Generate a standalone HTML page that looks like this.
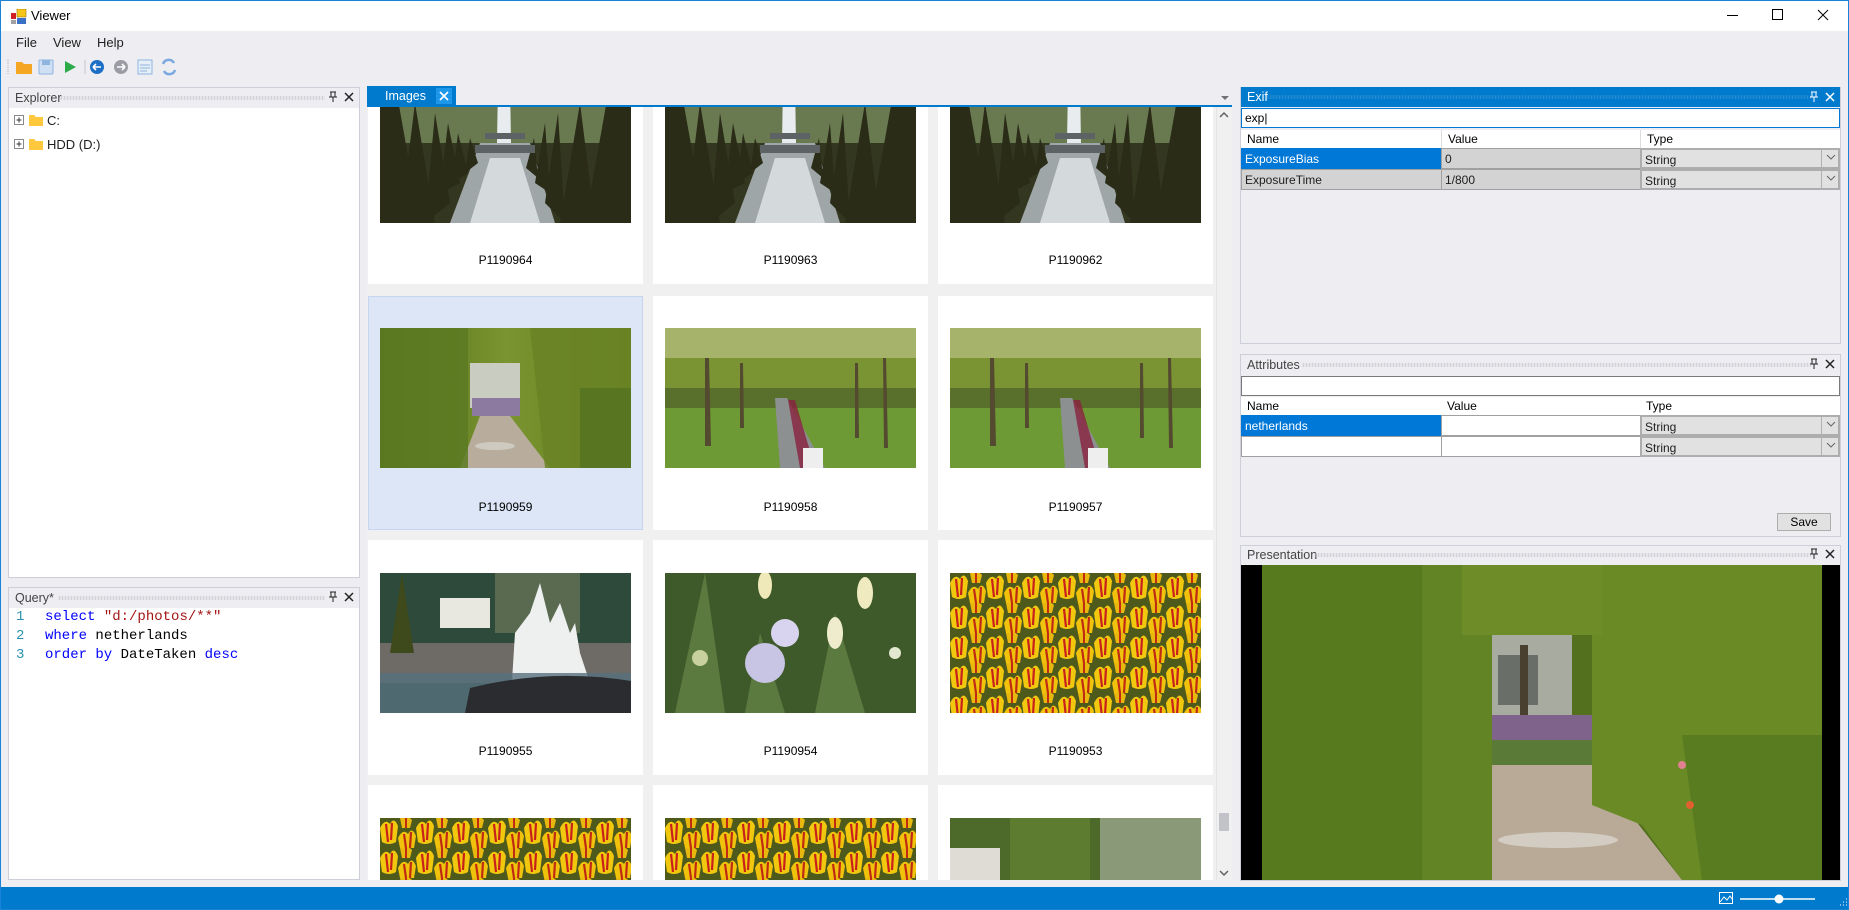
<!DOCTYPE html>
<html style="overflow:hidden"><head><meta charset="utf-8">
<style>
*{box-sizing:border-box;margin:0;padding:0}
html,body{width:1849px;height:910px;overflow:hidden}
body{background:#eeeef2;font-family:"Liberation Sans",sans-serif;font-size:12px;color:#1e1e1e;position:relative}
.a{position:absolute}
.win{left:0;top:0;width:1849px;height:910px;border:1px solid #1883d7;z-index:50;pointer-events:none}
.title{left:0;top:0;width:1849px;height:31px;background:#fff}
.hdr{height:20px;color:#444;font-size:12.5px;line-height:20px;padding-left:6px}
.dots{position:absolute;top:8px;height:4px;background-image:radial-gradient(#b4b4be 0.8px,transparent 0.9px);background-size:3px 2px}
.panel{background:#fff;border:1px solid #ccced8}
.cell{background:#fff;width:275px;overflow:hidden}
.lbl{position:absolute;width:275px;text-align:center;font-size:12px;color:#000}
.img{position:absolute;width:251px;height:140px}
.gh{position:absolute;height:18px;line-height:18px;padding-left:6px;background:#fff;color:#000;font-size:12px}
.gc{position:absolute;height:21px;line-height:20px;padding-left:3px;font-size:12px;border:1px solid #a0a0a0;}
.mono{font-family:"Liberation Mono",monospace;font-size:14px}
</style></head><body>
<svg width="0" height="0" style="position:absolute;left:0;top:0">
<defs>
<pattern id="tul" width="36" height="30" patternUnits="userSpaceOnUse">
<rect width="36" height="30" fill="#4e5a1c"/>
<path d="M0 10 Q5 0 10 6 Q14 -2 18 8 L16 24 Q9 28 2 24Z" fill="#f2c80f"/>
<path d="M6 6 L8 24 M12 5 L11 22" stroke="#c8201a" stroke-width="2.2"/>
<path d="M18 20 Q23 10 28 16 Q32 8 36 18 L34 30 L20 30Z" fill="#f0c20c"/>
<path d="M24 16 L26 30 M31 14 L30 30" stroke="#c02a14" stroke-width="2.2"/>
<path d="M20 0 Q26 -4 32 2 L30 10 L22 10Z" fill="#e8b80e"/><path d="M26 0 L26 10" stroke="#c02a14" stroke-width="2"/>
</pattern>
<symbol id="garden" viewBox="0 0 251 140" preserveAspectRatio="none">
<rect width="251" height="140" fill="#34371f"/>
<rect width="251" height="45" fill="#b9bdb8"/>
<rect y="15" width="251" height="45" fill="#6a7a50"/>
<path d="M118 0 L130 0 L132 120 L116 120Z" fill="#e8ecef"/>
<path d="M100 60 L150 60 L175 140 L70 140Z" fill="#9ea6a8"/>
<path d="M110 75 L140 75 L160 140 L90 140Z" fill="#d4d9dc"/>
<path d="M0 140 L0 0 L15 0 L40 140Z M20 140 L35 20 L55 140Z M45 140 L55 30 L70 120Z M60 110 L68 40 L80 100Z M72 100 L78 50 L88 90Z M85 90 L90 55 L98 80Z" fill="#2a2c18"/>
<path d="M251 140 L251 0 L230 0 L205 140Z M215 140 L200 20 L180 140Z M185 140 L178 30 L165 120Z M170 110 L165 40 L155 100Z M158 95 L154 55 L146 85Z" fill="#2a2c18"/>
<path d="M95 62 L155 62 L155 70 L95 70Z M105 50 L145 50 L145 56 L105 56Z" fill="#5d6264"/>
</symbol>
<symbol id="arch" viewBox="0 0 251 140" preserveAspectRatio="none">
<rect width="251" height="140" fill="#4f6a1c"/>
<path d="M0 0 H251 V140 H0Z" fill="url(#lv)"/>
<path d="M90 35 H140 V80 H90Z" fill="#c9ccc0"/>
<path d="M92 70 H140 V88 H92Z" fill="#8d7aa0"/>
<path d="M100 88 H130 L170 140 H80Z" fill="#b8ad9c"/>
<ellipse cx="115" cy="118" rx="20" ry="4" fill="#cfcac0"/>
<path d="M0 0 H88 V140 H0Z" fill="#5b7a22" opacity=".85"/>
<path d="M150 0 H251 V140 H165Z" fill="#6a8426" opacity=".85"/>
<path d="M200 60 H251 V140 H200Z" fill="#587622"/>
</symbol>
<linearGradient id="lv" x1="0" y1="0" x2="1" y2="0"><stop offset="0" stop-color="#546f1a"/><stop offset=".5" stop-color="#7a9430"/><stop offset="1" stop-color="#62801f"/></linearGradient>
<symbol id="park" viewBox="0 0 251 140" preserveAspectRatio="none">
<rect width="251" height="140" fill="#6d9a34"/>
<rect width="251" height="70" fill="#a6b36a"/>
<rect y="30" width="251" height="50" fill="#7a9434"/>
<rect y="60" width="251" height="20" fill="#59702c"/>
<path d="M110 70 H122 L160 140 H115Z" fill="#8c9090"/>
<path d="M123 72 L130 72 L150 140 L135 140Z" fill="#8a2040" opacity=".8"/>
<path d="M138 120 L158 120 L158 140 L138 140Z" fill="#eee"/>
<path d="M40 30 L44 30 L46 118 L40 118Z M75 35 L78 35 L79 100 L75 100Z M190 35 L193 35 L194 110 L190 110Z M218 30 L221 30 L223 120 L219 120Z" fill="#544a30"/>
</symbol>
<symbol id="fount" viewBox="0 0 251 140" preserveAspectRatio="none">
<rect width="251" height="140" fill="#2e4a3a"/>
<rect y="70" width="251" height="40" fill="#6e6a66"/>
<rect x="60" y="25" width="50" height="30" fill="#e8e8e0"/>
<path d="M10 80 L22 0 L34 80Z" fill="#3e4a1c"/>
<path d="M115 0 H200 V60 H115Z" fill="#5a6a50"/>
<path d="M130 140 L135 60 L150 40 L160 10 L170 50 L180 30 L190 60 L195 50 L200 80 L220 140Z" fill="#eef0f0"/>
<path d="M0 100 H251 V140 H0Z" fill="#56707e" opacity=".8"/>
<path d="M90 115 Q170 95 251 108 V140 H85Z" fill="#2a2c30"/>
</symbol>
<symbol id="flow" viewBox="0 0 251 140" preserveAspectRatio="none">
<rect width="251" height="140" fill="#3e5a2a"/>
<path d="M10 140 L40 0 L60 140Z M150 140 L170 40 L200 140Z M80 140 L95 60 L120 140Z" fill="#5a7a40"/>
<circle cx="100" cy="90" r="20" fill="#c8c4e4"/><circle cx="120" cy="60" r="14" fill="#d8d4f0"/>
<ellipse cx="170" cy="60" rx="8" ry="16" fill="#eeeccc"/><ellipse cx="200" cy="20" rx="8" ry="16" fill="#efeac0"/><ellipse cx="100" cy="12" rx="7" ry="14" fill="#efe8b8"/>
<circle cx="230" cy="80" r="6" fill="#e2e8d0"/><circle cx="35" cy="85" r="8" fill="#c8d0a0"/>
</symbol>
<symbol id="tulips" viewBox="0 0 251 140" preserveAspectRatio="none">
<rect width="251" height="140" fill="url(#tul)"/>
</symbol>
<symbol id="house" viewBox="0 0 251 140" preserveAspectRatio="none">
<rect width="251" height="140" fill="#4e6a2a"/>
<rect x="150" width="101" height="140" fill="#8a9a78"/>
<rect x="0" y="30" width="50" height="110" fill="#dedcd4"/>
<rect x="60" width="80" height="140" fill="#5e7c30"/>
</symbol>
</defs></svg>

<div class="a title"></div>
<svg class="a" style="left:11px;top:9px" width="16" height="15" viewBox="0 0 16 15"><rect x="6" y="0" width="9" height="8" fill="#f5c518" stroke="#a07a00" stroke-width=".6"/><rect x="0" y="4" width="5" height="6" fill="#d02020"/><rect x="6" y="9" width="9" height="6" fill="#3a70c8"/><rect x="0" y="11" width="5" height="4" fill="#a0a0a0"/></svg>
<div class="a" style="left:31px;top:8px;font-size:13px;color:#000">Viewer</div>
<svg class="a" style="left:1727px;top:8px" width="110" height="14" viewBox="0 0 110 14"><path d="M0 7.5 H11" stroke="#000"/><rect x="45.5" y="1.5" width="10" height="10" fill="none" stroke="#000"/><path d="M91 2 L101 12 M101 2 L91 12" stroke="#000"/></svg>

<div class="a" style="left:16px;top:35px;font-size:13px;color:#1e1e1e">File</div>
<div class="a" style="left:53px;top:35px;font-size:13px">View</div>
<div class="a" style="left:97px;top:35px;font-size:13px">Help</div>

<svg class="a" style="left:4px;top:57px" width="180" height="20" viewBox="0 0 180 20">
<path d="M4 2 v16" stroke="#b0b0b8" stroke-dasharray="1 1"/>
<path d="M12 5 h6 l2 2 h8 v10 h-16z" fill="#f5a623"/>
<rect x="35" y="3" width="14" height="14" rx="1" fill="#cfe0f5" stroke="#8fb4e0"/><rect x="38" y="3" width="8" height="5" fill="#8fb4e0"/>
<path d="M61 4 L72 10 L61 16Z" fill="#2bab4a"/>
<path d="M81 3 v14" stroke="#c4c4cc"/>
<circle cx="93" cy="10" r="7" fill="#1e6fc6"/><path d="M89 10 h8 M89 10 l3 -3 M89 10 l3 3" stroke="#fff" stroke-width="1.6"/>
<circle cx="117" cy="10" r="7" fill="#9c9ca4"/><path d="M113 10 h8 M121 10 l-3 -3 M121 10 l-3 3" stroke="#fff" stroke-width="1.6"/>
<rect x="134" y="3" width="14" height="14" fill="#e6eef8" stroke="#8fb4e0"/><path d="M136 8h10M136 11h10M136 14h7" stroke="#8fb4e0"/>
<path d="M159 7 a6 6 0 0 1 11 -1 M171 13 a6 6 0 0 1 -11 1" stroke="#7aa8e0" stroke-width="2.5" fill="none"/>
</svg>

<!-- Explorer -->
<div class="a panel" style="left:8px;top:87px;width:352px;height:491px"></div>
<div class="a hdr" style="left:9px;top:88px;width:350px;background:#eeeef2">Explorer</div>
<div class="dots" style="left:60px;top:96px;width:265px"></div>
<svg class="a" style="left:327px;top:91px" width="30" height="12"><path d="M3 1 h6 M4 1 v5 M8 1 v5 M2 6 h8 M6 6 v5" stroke="#222" fill="none"/><path d="M18 2 L26 10 M26 2 L18 10" stroke="#222" stroke-width="1.5"/></svg>
<svg class="a" style="left:14px;top:113px" width="30" height="40"><rect x=".5" y="2.5" width="9" height="9" fill="#fff" stroke="#888"/><path d="M2.5 7 h5 M5 4.5 v5" stroke="#333"/><path d="M15 2 h5 l2 2 h7 v9 h-14z" fill="#ffc83d"/>
<rect x=".5" y="26.5" width="9" height="9" fill="#fff" stroke="#888"/><path d="M2.5 31 h5 M5 28.5 v5" stroke="#333"/><path d="M15 26 h5 l2 2 h7 v9 h-14z" fill="#ffc83d"/></svg>
<div class="a" style="left:47px;top:113px;font-size:13px">C:</div>
<div class="a" style="left:47px;top:137px;font-size:13px">HDD (D:)</div>

<!-- Query -->
<div class="a panel" style="left:8px;top:587px;width:352px;height:293px"></div>
<div class="a hdr" style="left:9px;top:588px;width:350px;background:#eeeef2">Query*</div>
<div class="dots" style="left:58px;top:596px;width:267px"></div>
<svg class="a" style="left:327px;top:591px" width="30" height="12"><path d="M3 1 h6 M4 1 v5 M8 1 v5 M2 6 h8 M6 6 v5" stroke="#222" fill="none"/><path d="M18 2 L26 10 M26 2 L18 10" stroke="#222" stroke-width="1.5"/></svg>
<div class="a mono" style="left:16px;top:608px;line-height:19px;color:#2b91af">1<br>2<br>3</div>
<div class="a mono" style="left:45px;top:608px;line-height:19px;white-space:pre;color:#000"><span style="color:#0000ff">select</span> <span style="color:#a31515">"d:/photos/**"</span>
<span style="color:#0000ff">where</span> netherlands
<span style="color:#0000ff">order by</span> DateTaken <span style="color:#0000ff">desc</span></div>

<!-- Images -->
<div class="a" style="left:367px;top:86px;width:89px;height:20px;background:#007acc;color:#fff;font-size:12.5px;line-height:20px;padding-left:18px">Images</div>
<div class="a" style="left:436px;top:88px;width:16px;height:16px;background:#1c97ea"></div>
<svg class="a" style="left:439px;top:91px" width="10" height="10"><path d="M1 1 L9 9 M9 1 L1 9" stroke="#fff" stroke-width="1.6"/></svg>
<svg class="a" style="left:1220px;top:95px" width="10" height="6"><path d="M1 1 h8 l-4 4z" fill="#717171"/></svg>
<div class="a" style="left:367px;top:105px;width:865px;height:2px;background:#007acc"></div>
<div class="a" style="left:367px;top:107px;width:865px;height:773px;background:#f0f0f0;overflow:hidden">
  <div class="a cell" style="left:1px;top:0;height:177px"><svg class="img" style="left:12px;top:0;height:116px" viewBox="0 24 251 116" preserveAspectRatio="none"><use href="#garden" width="251" height="140"/></svg><div class="lbl" style="top:146px">P1190964</div></div>
  <div class="a cell" style="left:286px;top:0;height:177px"><svg class="img" style="left:12px;top:0;height:116px" viewBox="0 24 251 116" preserveAspectRatio="none"><use href="#garden" width="251" height="140"/></svg><div class="lbl" style="top:146px">P1190963</div></div>
  <div class="a cell" style="left:571px;top:0;height:177px"><svg class="img" style="left:12px;top:0;height:116px" viewBox="0 24 251 116" preserveAspectRatio="none"><use href="#garden" width="251" height="140"/></svg><div class="lbl" style="top:146px">P1190962</div></div>
  <div class="a cell" style="left:1px;top:189px;height:234px;background:#dce6f6;border:1px solid #c6d6ee"><svg class="img" style="left:11px;top:31px"><use href="#arch" width="251" height="140"/></svg><div class="lbl" style="top:203px;left:-1px">P1190959</div></div>
  <div class="a cell" style="left:286px;top:189px;height:234px"><svg class="img" style="left:12px;top:32px"><use href="#park" width="251" height="140"/></svg><div class="lbl" style="top:204px">P1190958</div></div>
  <div class="a cell" style="left:571px;top:189px;height:234px"><svg class="img" style="left:12px;top:32px"><use href="#park" width="251" height="140"/></svg><div class="lbl" style="top:204px">P1190957</div></div>
  <div class="a cell" style="left:1px;top:433px;height:235px"><svg class="img" style="left:12px;top:33px"><use href="#fount" width="251" height="140"/></svg><div class="lbl" style="top:204px">P1190955</div></div>
  <div class="a cell" style="left:286px;top:433px;height:235px"><svg class="img" style="left:12px;top:33px"><use href="#flow" width="251" height="140"/></svg><div class="lbl" style="top:204px">P1190954</div></div>
  <div class="a cell" style="left:571px;top:433px;height:235px"><svg class="img" style="left:12px;top:33px"><use href="#tulips" width="251" height="140"/></svg><div class="lbl" style="top:204px">P1190953</div></div>
  <div class="a cell" style="left:1px;top:678px;height:95px"><svg class="img" style="left:12px;top:33px;height:62px" viewBox="0 0 251 62" preserveAspectRatio="none"><use href="#tulips" width="251" height="140"/></svg></div>
  <div class="a cell" style="left:286px;top:678px;height:95px"><svg class="img" style="left:12px;top:33px;height:62px" viewBox="0 0 251 62" preserveAspectRatio="none"><use href="#tulips" width="251" height="140"/></svg></div>
  <div class="a cell" style="left:571px;top:678px;height:95px"><svg class="img" style="left:12px;top:33px;height:62px" viewBox="0 0 251 62" preserveAspectRatio="none"><use href="#house" width="251" height="140"/></svg></div>
 <div class="a" style="left:849px;top:0;width:16px;height:773px;background:#f0f0f0;border-left:1px solid #e4e4e4"></div>
 <div class="a" style="left:852px;top:706px;width:10px;height:18px;background:#c2c3c9"></div>
 <svg class="a" style="left:852px;top:4px" width="10" height="8"><path d="M1 6 L5 2 L9 6" stroke="#606060" fill="none" stroke-width="1.5"/></svg>
 <svg class="a" style="left:852px;top:762px" width="10" height="8"><path d="M1 2 L5 6 L9 2" stroke="#606060" fill="none" stroke-width="1.5"/></svg>
</div>

<!-- Exif -->
<div class="a" style="left:1240px;top:87px;width:601px;height:257px;background:#eeeef2;border:1px solid #ccced8"></div>
<div class="a hdr" style="left:1241px;top:87px;width:599px;background:#007acc;color:#fff">Exif</div>
<div class="dots" style="left:1266px;top:95px;width:545px;background-image:radial-gradient(#4a9ad8 0.8px,transparent 0.9px)"></div>
<svg class="a" style="left:1808px;top:91px" width="30" height="12"><path d="M3 1 h6 M4 1 v5 M8 1 v5 M2 6 h8 M6 6 v5" stroke="#fff" fill="none"/><path d="M18 2 L26 10 M26 2 L18 10" stroke="#fff" stroke-width="1.5"/></svg>
<div class="a" style="left:1241px;top:108px;width:599px;height:20px;background:#fff;border:1px solid #0078d7;padding-left:3px;line-height:18px;font-size:12px;color:#000">exp|</div>
<div class="gh" style="left:1241px;top:130px;width:200px">Name</div>
<div class="gh" style="left:1441px;top:130px;width:199px;border-left:1px solid #ddd">Value</div>
<div class="gh" style="left:1640px;top:130px;width:200px;border-left:1px solid #ddd">Type</div>
<div class="gc" style="left:1241px;top:148px;width:201px;background:#0078d7;color:#fff;border-color:#0078d7">ExposureBias</div>
<div class="gc" style="left:1441px;top:148px;width:200px;background:#d3d3d3">0</div>
<div class="gc" style="left:1640px;top:148px;width:200px;background:#e1e1e1;border:2px solid #adadad">String</div>
<div class="gc" style="left:1241px;top:169px;width:201px;background:#d3d3d3">ExposureTime</div>
<div class="gc" style="left:1441px;top:169px;width:200px;background:#d3d3d3">1/800</div>
<div class="gc" style="left:1640px;top:169px;width:200px;background:#e1e1e1;border:2px solid #adadad">String</div>
<div class="a" style="left:1821px;top:150px;width:1px;height:40px;background:#b0b0b0"></div>
<svg class="a" style="left:1825px;top:153px" width="12" height="30"><path d="M2 2 L6 6 L10 2 M2 23 L6 27 L10 23" stroke="#666" fill="none"/></svg>

<!-- Attributes -->
<div class="a" style="left:1240px;top:354px;width:601px;height:183px;background:#eeeef2;border:1px solid #ccced8"></div>
<div class="a hdr" style="left:1241px;top:355px;width:599px">Attributes</div>
<div class="dots" style="left:1302px;top:363px;width:509px"></div>
<svg class="a" style="left:1808px;top:358px" width="30" height="12"><path d="M3 1 h6 M4 1 v5 M8 1 v5 M2 6 h8 M6 6 v5" stroke="#222" fill="none"/><path d="M18 2 L26 10 M26 2 L18 10" stroke="#222" stroke-width="1.5"/></svg>
<div class="a" style="left:1241px;top:376px;width:599px;height:20px;background:#fff;border:1px solid #7a7a7a"></div>
<div class="gh" style="left:1241px;top:397px;width:200px">Name</div>
<div class="gh" style="left:1441px;top:397px;width:199px">Value</div>
<div class="gh" style="left:1640px;top:397px;width:200px">Type</div>
<div class="gc" style="left:1241px;top:415px;width:201px;background:#0078d7;color:#fff;border-color:#0078d7">netherlands</div>
<div class="gc" style="left:1441px;top:415px;width:200px;background:#fff"></div>
<div class="gc" style="left:1640px;top:415px;width:200px;background:#e1e1e1;border:2px solid #adadad">String</div>
<div class="gc" style="left:1241px;top:436px;width:201px;background:#fff"></div>
<div class="gc" style="left:1441px;top:436px;width:200px;background:#fff"></div>
<div class="gc" style="left:1640px;top:436px;width:200px;background:#e1e1e1;border:2px solid #adadad">String</div>
<div class="a" style="left:1821px;top:417px;width:1px;height:40px;background:#b0b0b0"></div>
<svg class="a" style="left:1825px;top:420px" width="12" height="30"><path d="M2 2 L6 6 L10 2 M2 23 L6 27 L10 23" stroke="#666" fill="none"/></svg>
<div class="a" style="left:1777px;top:513px;width:54px;height:18px;background:#e1e1e1;border:1px solid #adadad;text-align:center;line-height:16px;font-size:12px;color:#000">Save</div>

<!-- Presentation -->
<div class="a" style="left:1240px;top:545px;width:601px;height:336px;background:#eeeef2;border:1px solid #ccced8"></div>
<div class="a hdr" style="left:1241px;top:545px;width:599px">Presentation</div>
<div class="dots" style="left:1314px;top:553px;width:497px"></div>
<svg class="a" style="left:1808px;top:548px" width="30" height="12"><path d="M3 1 h6 M4 1 v5 M8 1 v5 M2 6 h8 M6 6 v5" stroke="#222" fill="none"/><path d="M18 2 L26 10 M26 2 L18 10" stroke="#222" stroke-width="1.5"/></svg>
<div class="a" style="left:1241px;top:565px;width:599px;height:315px;background:#000"></div>
<svg class="a" style="left:1262px;top:565px" width="560" height="315" viewBox="0 0 560 315" preserveAspectRatio="none">
<rect width="560" height="315" fill="#52701e"/>
<rect x="220" y="70" width="90" height="130" fill="#a8aca0"/>
<rect x="236" y="90" width="40" height="50" fill="#6a6e68"/>
<rect x="258" y="80" width="8" height="100" fill="#4a4030"/>
<rect x="222" y="150" width="110" height="45" fill="#80638a"/>
<rect x="222" y="175" width="110" height="25" fill="#5a7a38"/>
<path d="M230 200 H330 L420 315 H200Z" fill="#b8aa96"/>
<ellipse cx="296" cy="275" rx="60" ry="8" fill="#d2ccc2"/>
<path d="M0 0 H230 V315 H0Z" fill="#628424"/>
<path d="M0 0 H160 V315 H0Z" fill="#577a1e"/>
<path d="M330 0 H560 V315 H420 L380 260 L330 240Z" fill="#6a8a26"/>
<path d="M420 170 H560 V315 H440Z" fill="#5a7c20"/>
<path d="M200 0 H340 V70 H200Z" fill="#6e8c28"/>
<circle cx="420" cy="200" r="4" fill="#e08090"/><circle cx="428" cy="240" r="4" fill="#e06030"/>
</svg>

<!-- Status -->
<div class="a" style="left:0;top:887px;width:1849px;height:23px;background:#007acc"></div>
<svg class="a" style="left:1718px;top:890px" width="131" height="18" viewBox="0 0 131 18">
<rect x="1.5" y="2.5" width="13" height="11" fill="none" stroke="#fff"/><path d="M2 12 L6 7 L9 10 L12 6 L14 9" stroke="#fff" fill="none"/>
<path d="M22 9 H97" stroke="#fff" stroke-width="1.5"/><circle cx="61" cy="9" r="4.5" fill="#fff"/>
<path d="M122 15h1M125 15h1M128 15h1M125 12h1M128 12h1M128 9h1" stroke="#fff"/>
</svg>
<div class="a win"></div>
</body></html>
